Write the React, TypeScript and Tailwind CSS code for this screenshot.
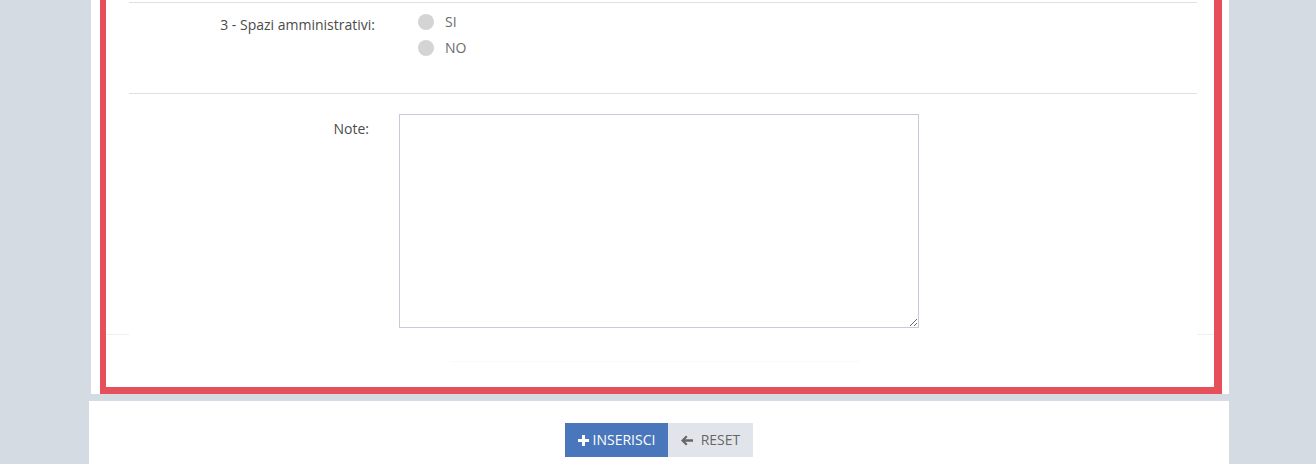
const PlusGlyph = () => (
  <svg width="11" height="11" viewBox="0 0 11 11" className="shrink-0">
    <path d="M4 0h3v4h4v3H7v4H4V7H0V4h4z" fill="currentColor" />
  </svg>
);

const ArrowGlyph = () => (
  <svg width="12" height="11" viewBox="0 0 12 11" className="shrink-0">
    <path
      d="M0 5.5 5 0.5 6.6 2.1 4.2 4.3H12v2.4H4.2l2.4 2.2L5 10.5z"
      fill="currentColor"
    />
  </svg>
);

const Radio = ({ label }: { label: string }) => (
  <label className="flex h-[26px] items-center">
    <span className="size-4 rounded-full bg-[#d4d4d4]" />
    <span className="ml-[11px] text-[14px] text-[#6b6b6b]">{label}</span>
  </label>
);

const App = () => {
  return (
    <div
      className="h-[464px] overflow-hidden bg-[#d5dbe3] text-[14px] leading-5"
      style={{ fontFamily: '"Open Sans", "Liberation Sans", sans-serif' }}
    >
      <div className="ml-[91px] w-[1138px] bg-white pr-[7px] pl-[9px]">
        <div className="border-b-[7px] border-l-[6px] border-r-[8px] border-[#e5505a] pt-[2px] pr-[17px] pl-[23px]">
          {/* domanda 3 */}
          <div className="flex h-[91px] border-t border-[#dde1e6] pt-[6px]">
            <div className="w-[246px] pt-[6px] text-right text-[#4b4b4b]">
              3 - Spazi amministrativi:
            </div>
            <div className="ml-[43px] flex flex-col">
              <Radio label="SI" />
              <Radio label="NO" />
            </div>
          </div>

          {/* note */}
          <div className="flex border-t border-[#dde1e6] pt-[20px]">
            <div className="w-[240px] pt-[5px] text-right text-[#4b4b4b]">
              Note:
            </div>
            <textarea className="ml-[30px] h-[214px] w-[520px] resize border border-[#c5ccd8] bg-white p-2 outline-none" />
          </div>

          <div className="mt-[6px] mr-[-17px] ml-[-23px] flex justify-between">
            <div className="h-px w-[23px] bg-[#f0f0f0]" />
            <div className="h-px w-[17px] bg-[#f0f0f0]" />
          </div>
          <div className="mt-[26px] ml-[321px] h-px w-[410px] bg-[#fafaf0]" />
          <div className="h-[25px]" />
        </div>
      </div>

      <div className="mt-[7px] ml-[89px] flex h-[64px] w-[1140px] justify-center bg-white pt-[22px]">
        <div className="flex h-[34px]">
          <button className="flex w-[103px] items-center justify-center gap-[4px] bg-[#4a76bc] text-[14px] text-white uppercase">
            <PlusGlyph />
            Inserisci
          </button>
          <button className="flex w-[85px] items-center justify-center gap-[8px] bg-[#e1e5eb] text-[14px] text-[#666] uppercase">
            <ArrowGlyph />
            Reset
          </button>
        </div>
      </div>
    </div>
  );
};

export default App;
